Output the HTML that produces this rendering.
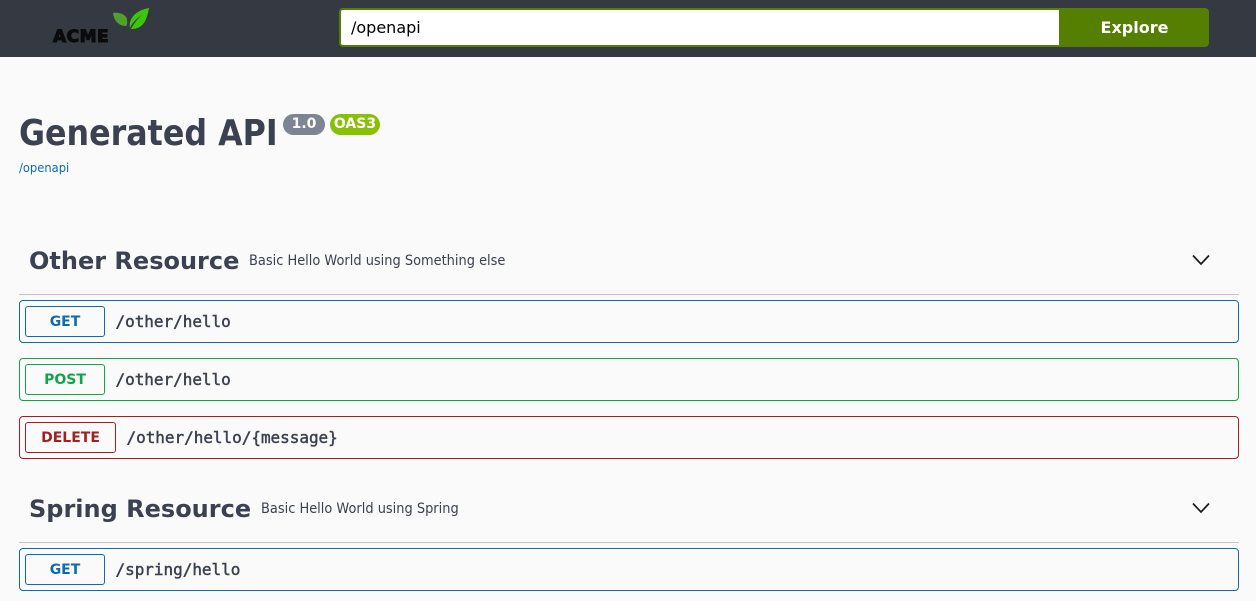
<!DOCTYPE html>
<html><head><meta charset="utf-8"><style>
html,body{margin:0;padding:0;width:1256px;height:601px;overflow:hidden;background:#fafafa;font-family:"DejaVu Sans",sans-serif}
.a{position:absolute;white-space:nowrap}
.row{position:absolute;left:19px;width:1218px;height:41px;border:1px solid;border-radius:4px}
.btn{position:absolute;left:25px;height:29px;border:1px solid;border-radius:3px;font:bold 14px/31px "DejaVu Sans",sans-serif;text-align:center;background:#fafafa}
.path{position:absolute;font:normal 16px/20px "DejaVu Sans Mono",monospace;color:#3b4151;white-space:nowrap;letter-spacing:-.03px;-webkit-text-stroke:.45px #3b4151}
.h{position:absolute;left:29px;font:bold 24px/32px "DejaVu Sans",sans-serif;color:#3b4151;white-space:nowrap}
.d{position:absolute;font:14px/20px "DejaVu Sans",sans-serif;color:#3b4151;white-space:nowrap;transform:scaleX(.926);transform-origin:0 0}
.sep{position:absolute;left:19px;width:1220px;height:1px;background:#c2c4ca}
</style></head><body>
<div class="a" style="left:0;top:0;width:1256px;height:57px;background:#353a42"></div>
<div class="a" style="left:53px;top:27px;font:900 17px/20px 'DejaVu Sans',sans-serif;color:#0b0b0b;-webkit-text-stroke:1.1px #0b0b0b;letter-spacing:.5px">ACME</div>
<svg class="a" style="left:110px;top:5px" width="42" height="28" viewBox="0 0 42 28">
<path d="M3 8C10 7 16 10 17 14C17.500 18 17 21 16 21C9 21 4 16 3 8Z" fill="#4ea22c"/>
<path d="M39 3C37 14 34 23 23 24L21 24C23 20 27 14 32 10C27 13 22 18 20 23C18 14 26 5 39 3Z" fill="#3cc70a"/>
</svg>
<div class="a" style="left:339px;top:8px;height:35px;border:2px solid #547f00;border-right:0;border-radius:4px 0 0 4px;background:#fff;font:16px/35px 'DejaVu Sans',sans-serif;color:#000;padding-left:10px;width:710px">/openapi</div>
<div class="a" style="left:1059px;top:8px;width:149px;padding-left:1px;height:39px;background:#547f00;border-radius:0 4px 4px 0;font:bold 16px/39px 'DejaVu Sans',sans-serif;color:#fff;text-align:center">Explore</div>
<div class="a" style="left:19px;top:110px;font:bold 36px/48px 'DejaVu Sans',sans-serif;color:#3b4151;transform:scaleX(.881);transform-origin:0 0">Generated API</div>
<div class="a" style="left:283px;top:114px;width:42px;height:21px;border-radius:11px;background:#7d8492;font:bold 14px/21px 'DejaVu Sans',sans-serif;color:#fff;text-align:center">1.0</div>
<div class="a" style="left:330px;top:114px;width:50px;height:21px;border-radius:11px;background:#89bf04;font:bold 14px/21px 'DejaVu Sans',sans-serif;color:#fff;text-align:center">OAS3</div>
<div class="a" style="left:19px;top:159px;font:12px/18px 'DejaVu Sans',sans-serif;color:#0b6bb5;transform:scaleX(.96);transform-origin:0 0">/openapi</div>

<div class="h" style="top:245px">Other Resource</div>
<div class="d" style="left:249px;top:251px">Basic Hello World using Something else</div>
<svg class="a" style="left:1191px;top:249.500px" width="20" height="20" viewBox="0 0 20 20"><path d="M2 5.500L10 14L18 5.500" fill="none" stroke="#1a1a1a" stroke-width="1.700"/></svg>
<div class="sep" style="top:294px"></div>

<div class="row" style="top:300px;border-color:#0f6ab4"></div>
<div class="btn" style="top:306px;width:78px;border-color:#0f6ab4;color:#0f6ab4">GET</div>
<div class="path" style="left:115.500px;top:312px">/other/hello</div>

<div class="row" style="top:358px;border-color:#10a54a"></div>
<div class="btn" style="top:364px;width:78px;border-color:#10a54a;color:#10a54a">POST</div>
<div class="path" style="left:115.500px;top:370px">/other/hello</div>

<div class="row" style="top:416px;border-color:#a41e22"></div>
<div class="btn" style="top:422px;width:89px;border-color:#a41e22;color:#a41e22">DELETE</div>
<div class="path" style="left:126.500px;top:428px">/other/hello/{message}</div>

<div class="h" style="top:493px">Spring Resource</div>
<div class="d" style="left:261px;top:499px">Basic Hello World using Spring</div>
<svg class="a" style="left:1191px;top:497.500px" width="20" height="20" viewBox="0 0 20 20"><path d="M2 5.500L10 14L18 5.500" fill="none" stroke="#1a1a1a" stroke-width="1.700"/></svg>
<div class="sep" style="top:542px"></div>

<div class="row" style="top:548px;border-color:#0f6ab4"></div>
<div class="btn" style="top:554px;width:78px;border-color:#0f6ab4;color:#0f6ab4">GET</div>
<div class="path" style="left:115.500px;top:560px">/spring/hello</div>
</body></html>
